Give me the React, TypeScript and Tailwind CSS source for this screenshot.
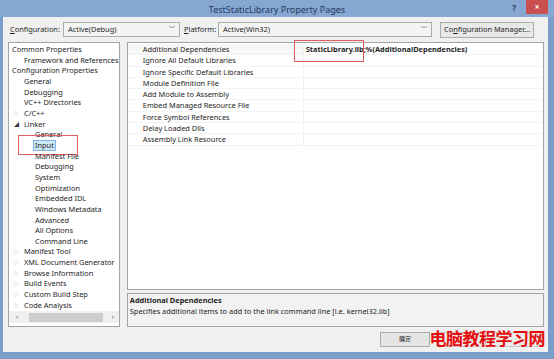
const tree: { label: string; indent: number; arrow?: 'open' | 'closed'; selected?: boolean }[] = [
  { label: 'Common Properties', indent: 0 },
  { label: 'Framework and References', indent: 1 },
  { label: 'Configuration Properties', indent: 0 },
  { label: 'General', indent: 1 },
  { label: 'Debugging', indent: 1 },
  { label: 'VC++ Directories', indent: 1 },
  { label: 'C/C++', indent: 1, arrow: 'closed' },
  { label: 'Linker', indent: 1, arrow: 'open' },
  { label: 'General', indent: 2 },
  { label: 'Input', indent: 2, selected: true },
  { label: 'Manifest File', indent: 2 },
  { label: 'Debugging', indent: 2 },
  { label: 'System', indent: 2 },
  { label: 'Optimization', indent: 2 },
  { label: 'Embedded IDL', indent: 2 },
  { label: 'Windows Metadata', indent: 2 },
  { label: 'Advanced', indent: 2 },
  { label: 'All Options', indent: 2 },
  { label: 'Command Line', indent: 2 },
  { label: 'Manifest Tool', indent: 1, arrow: 'closed' },
  { label: 'XML Document Generator', indent: 1, arrow: 'closed' },
  { label: 'Browse Information', indent: 1, arrow: 'closed' },
  { label: 'Build Events', indent: 1, arrow: 'closed' },
  { label: 'Custom Build Step', indent: 1, arrow: 'closed' },
  { label: 'Code Analysis', indent: 1, arrow: 'closed' },
]

const props = [
  'Additional Dependencies',
  'Ignore All Default Libraries',
  'Ignore Specific Default Libraries',
  'Module Definition File',
  'Add Module to Assembly',
  'Embed Managed Resource File',
  'Force Symbol References',
  'Delay Loaded Dlls',
  'Assembly Link Resource',
]

const indents = ['pl-[3px]', 'pl-[15px]', 'pl-[26px]']

function Combo({ value, width }: { value: string; width: string }) {
  return (
    <div className={`${width} h-[15px] flex items-center justify-between border border-[#acacac] bg-[#f4f4f4] pl-[4px] pr-[4px]`}>
      <span>{value}</span>
      <span className="text-[6px] text-[#555]">﹀</span>
    </div>
  )
}

export default function App() {
  return (
    <div
      className="w-[554px] h-[359px] bg-[#7b9dc9] flex flex-col overflow-hidden text-[7.4px] text-[#1e1e1e]"
      style={{ fontFamily: '"Noto Sans", "Noto Sans CJK SC", sans-serif' }}
    >
      {/* title bar */}
      <div className="h-[17px] grid grid-cols-[1fr_auto_1fr] items-center bg-[#86a7d2]">
        <div />
        <div className="text-[9px] text-[#223a5e] leading-none pt-[1px]">TestStaticLibrary Property Pages</div>
        <div className="flex justify-end items-start h-full">
          <span className="text-[8px] font-bold text-[#1f3555] mt-[2px] mr-[10px]">?</span>
          <div className="w-[22px] h-[14px] bg-[#c9504f] text-white text-[8px] font-bold flex items-center justify-center mr-[6px]">×</div>
        </div>
      </div>

      {/* client */}
      <div className="flex-1 ml-[3px] mr-[6px] mb-[7px] bg-[#f0f0f0] flex flex-col pl-[5px] pr-[4px]">
        <div className="h-[25px] flex items-center">
          <span className="w-[55px] pl-[2px]"><u>C</u>onfiguration:</span>
          <Combo value="Active(Debug)" width="w-[117px]" />
          <span className="w-[38px] pl-[4px]"><u>P</u>latform:</span>
          <Combo value="Active(Win32)" width="w-[214px]" />
          <div className="ml-[8px] w-[94px] h-[16px] border border-[#acacac] bg-[#e8e8e8] flex items-center justify-center">
            Co<u>n</u>figuration Manager...
          </div>
        </div>

        <div className="flex gap-[7px]">
          {/* tree */}
          <div className="w-[112px] h-[285px] bg-white border border-[#a5a5a5] flex flex-col pt-[1px]">
            <div className="flex-1 overflow-hidden">
              {tree.map((t, i) => (
                <div key={i} className={`h-[10.67px] leading-[10.67px] whitespace-nowrap flex items-center relative ${indents[t.indent]}`}>
                  {t.arrow === 'closed' && <span className="absolute left-[5px] text-[5px] text-[#a8a8a8]">▷</span>}
                  {t.arrow === 'open' && <span className="absolute left-[5px] text-[5px] text-[#333]">◢</span>}
                  <span className={t.selected ? 'relative bg-[#cde8f7] border border-[#7eb4ea] px-[1px] leading-[9px] -ml-[2px]' : ''}>
                    {t.label}
                    {t.selected && (
                      <span className="absolute -left-[16px] -top-[6px] w-[60px] h-[20px] border border-[#e06060]" />
                    )}
                  </span>
                </div>
              ))}
            </div>
            <div className="h-[12px] mb-[3px] flex items-center bg-[#f0f0f0] text-[7px] text-[#606060]">
              <span className="w-[16px] text-center">‹</span>
              <div className="flex-1 h-[9px] bg-[#cdcdcd] mx-[4px]" />
              <span className="w-[12px] text-center">›</span>
            </div>
          </div>

          {/* right side */}
          <div className="w-[418px] flex flex-col gap-[3px]">
            <div className="h-[248px] bg-white border border-[#a5a5a5] pt-[1px] relative">
              {props.map((p, i) => (
                <div key={p} className="h-[11.3px] flex border-b border-[#f3f3f3]">
                  <div className={`w-[175px] pl-[15px] leading-[11.3px] ${i === 0 ? 'bg-[#f7f7f7]' : ''}`}>{p}</div>
                  <div className="flex-1 pl-[2px] leading-[11.3px] border-l border-[#f0f0f0] font-bold">
                    {i === 0 ? 'StaticLibrary.lib;%(AdditionalDependencies)' : ''}
                  </div>
                </div>
              ))}
              <div className="absolute left-[166px] -top-[3px] w-[70px] h-[22px] border border-[#e06060]" />
            </div>
            <div className="h-[34px] bg-[#f2f2f2] border border-[#a5a5a5] pl-[2px] pt-[1px] leading-[11px]">
              <div className="font-bold">Additional Dependencies</div>
              <div>Specifies additional items to add to the link command line [i.e. kernel32.lib]</div>
            </div>
          </div>
        </div>

        {/* buttons */}
        <div className="flex-1 flex items-center justify-end gap-[6px] pr-[2px] relative">
          <div className="w-[50px] h-[15px] border border-[#acacac] bg-[#e5e5e5] flex items-center justify-center text-[6px]">确定</div>
          <div className="w-[50px] h-[15px] border border-[#c8c8c8] bg-[#ececec]" />
          <div className="w-[50px] h-[15px] border border-[#c8c8c8] bg-[#ececec]" />
          <div className="absolute right-[-1px] top-[3px] text-[17px] font-bold text-[#e50d0d] tracking-[-0.5px] leading-none">电脑教程学习网</div>
        </div>
      </div>
    </div>
  )
}
